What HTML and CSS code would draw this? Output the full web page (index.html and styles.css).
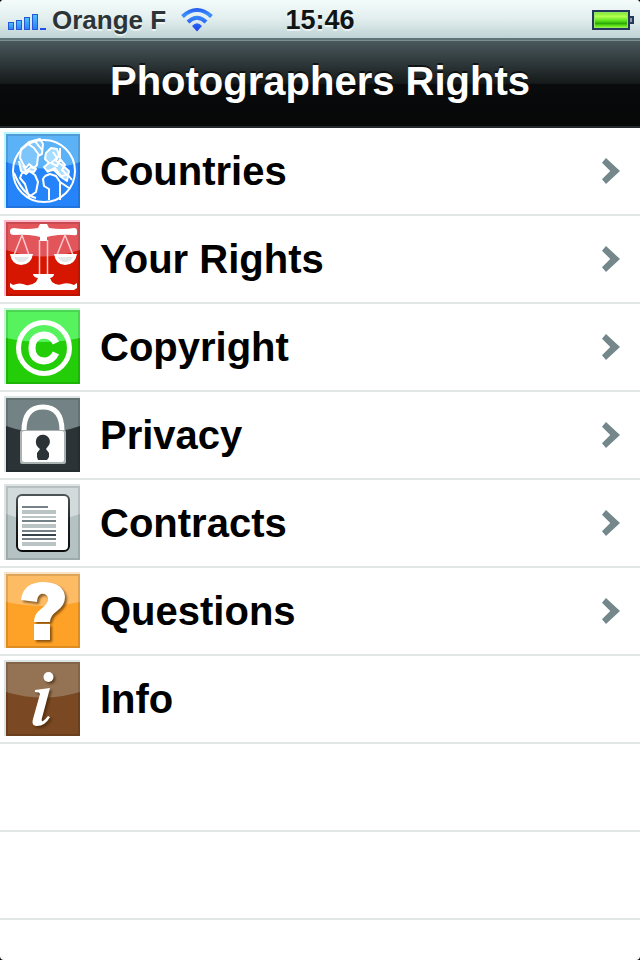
FILE: index.html
```
<!DOCTYPE html>
<html lang="en">
<head>
    <meta charset="UTF-8">
    <meta name="viewport" content="width=device-width, initial-scale=1.0">
    <title>Photographers Rights</title>
    <link rel="stylesheet" href="styles.css">
</head>
<body>
    <div class="screen">
        <div class="status-bar">
            <div class="carrier">
                <svg class="signal" width="38" height="18" viewBox="0 0 38 18" aria-hidden="true">
                    <defs>
                        <linearGradient id="barFill" x1="0" y1="0" x2="0" y2="1">
                            <stop offset="0" stop-color="#4cc4ff"/>
                            <stop offset="1" stop-color="#2e7cf6"/>
                        </linearGradient>
                    </defs>
                    <g fill="url(#barFill)" stroke="#2458d8" stroke-width="1">
                        <rect x="0.5" y="9.5" width="5" height="7"/>
                        <rect x="8.5" y="7.5" width="5" height="9"/>
                        <rect x="16.5" y="4.5" width="5" height="12"/>
                        <rect x="24.5" y="1.5" width="5" height="15"/>
                    </g>
                    <rect x="32" y="15" width="6" height="2" fill="#2050e8"/>
                </svg>
                <span>Orange F</span>
                <svg class="wifi" width="32" height="26" viewBox="0 0 32 26" aria-hidden="true">
                    <defs>
                        <linearGradient id="wifiFill" x1="0" y1="0" x2="0" y2="26" gradientUnits="userSpaceOnUse">
                            <stop offset="0" stop-color="#1f50ea"/>
                            <stop offset="0.3" stop-color="#3a90ff"/>
                            <stop offset="1" stop-color="#1838e8"/>
                        </linearGradient>
                    </defs>
                    <g fill="none" stroke="url(#wifiFill)" stroke-width="4">
                        <path d="M1.5 9.5Q16 -3.5 30.5 9.5"/>
                        <path d="M7 15Q16 6.5 25 15"/>
                    </g>
                    <path d="M11 19Q16 13.5 21 19L16 24.5Z" fill="url(#wifiFill)"/>
                </svg>
            </div>
            <time class="clock">15:46</time>
            <svg class="battery" width="42" height="22" viewBox="0 0 42 22" aria-hidden="true">
                <defs>
                    <linearGradient id="charge" x1="0" y1="0" x2="0" y2="1">
                        <stop offset="0" stop-color="#86e83a"/>
                        <stop offset="0.25" stop-color="#b4ff50"/>
                        <stop offset="0.55" stop-color="#5be31c"/>
                        <stop offset="0.75" stop-color="#2eaa08"/>
                        <stop offset="1" stop-color="#7cff20"/>
                    </linearGradient>
                </defs>
                <rect x="1" y="2" width="36" height="18" fill="#8fe860" stroke="#26375c" stroke-width="2"/>
                <rect x="3" y="4" width="32" height="14" fill="url(#charge)"/>
                <path d="M38 7h4v8h-4z" fill="#26375c"/>
                <path d="M38 9h2v4h-2z" fill="#8c9cae"/>
            </svg>
        </div>

        <header class="nav-bar">
            <h1 class="title">Photographers Rights</h1>
        </header>

        <nav class="menu">
            <a class="row" href="#countries">
                <svg class="icon countries" viewBox="6 6 74 74" aria-hidden="true">
                    <path class="gloss" d="M6 6H80V34Q43 47 6 34Z"/>
                    <path class="edge" d="M7 7H79V79H7Z"/>
                    <g fill="#a6dcff" stroke="#fff" stroke-width="2" stroke-linejoin="round">
                        <path d="M21 21L29 14L40 11L43 16L42 26L38 28L37 37L34 40L29 36L26 40L23 36L20 30Z" fill-opacity="0.45"/>
                        <path d="M23 37L26 43L31 39L36 41L34 44L29 43L26 46L21 43L19 33"/>
                        <path d="M46 25L51 20L57 21L59 27L56 33L62 37L69 43L67 53L61 49L54 42L47 43L44 39L49 35L45 31Z"/>
                        <path d="M53 24L57 30L51 35L57 38L60 31L65 37L62 42L67 47L61 48L55 40L47 44" fill="none"/>
                    </g>
                    <g fill="none" stroke="#fff" stroke-width="2" stroke-linejoin="round">
                        <path d="M22 45L20 50L25 56L29 69L36 64L38 54L35 47L29 43Z"/>
                        <path d="M45 48L43 51L44 58L49 61V72M60 72V54L56 48L50 46L45 48M60 54L69 60M60 20V30M68 47L72 52"/>
                        <path d="M27 15L34 20L39 27M34 12L42 22M14 45Q23 67 36 70"/>
                        <circle cx="44" cy="43" r="31"/>
                    </g>
                </svg>
                <span class="label">Countries</span>
                <span class="chevron"></span>
            </a>

            <a class="row" href="#rights">
                <svg class="icon rights" viewBox="6 6 74 74" aria-hidden="true">
                    <path class="gloss" d="M6 6H80V34Q43 47 6 34Z"/>
                    <path class="edge" d="M7 7H79V79H7Z"/>
                    <path d="M40 8H47L49 12Q63 14 74 12Q77 12 77 15V18Q76 20 73 19Q62 18 51 20L47 21V25H40V21L36 20Q25 18 14 19Q10 19 10 16V14Q11 12 14 12Q26 14 38 12Z" fill="#fff"/>
                    <path d="M22 19L14 39M22 19L29 39M65 19L57 39M65 19L73 39M39.5 24V60M47.5 24V60" fill="none" stroke="#ffc9cd" stroke-width="1.5"/>
                    <path d="M10 38H33Q31 49 21 49Q12 49 10 38ZM54 38H77Q75 49 65 49Q56 49 54 38Z" fill="#fff"/>
                    <path d="M14 41H29Q27 46 21 46Q16 46 14 41ZM58 41H73Q71 46 65 46Q60 46 58 41Z" fill="#e3e9e7"/>
                    <path d="M33 58H54Q54 61 50 62L52 66Q57 70 62 68Q68 66 74 69L77 67V72L74 74H14L10 71V67L13 69Q20 66 26 69Q31 70 36 66L38 62Q33 61 33 58Z" fill="#fff"/>
                </svg>
                <span class="label">Your Rights</span>
                <span class="chevron"></span>
            </a>

            <a class="row" href="#copyright">
                <svg class="icon copyright" viewBox="6 6 74 74" aria-hidden="true">
                    <path class="gloss" d="M6 6H80V34Q43 42 6 34Z"/>
                    <path class="edge" d="M7 7H79V79H7Z"/>
                    <circle cx="44" cy="44" r="25.5" fill="none" stroke="#fff" stroke-width="5"/>
                    <path d="M56 39Q52 31 44 31Q32 32 32 44Q32 56 44 57Q52 57 56 49" fill="none" stroke="#fff" stroke-width="7"/>
                </svg>
                <span class="label">Copyright</span>
                <span class="chevron"></span>
            </a>

            <a class="row" href="#privacy">
                <svg class="icon privacy" viewBox="6 6 74 74" aria-hidden="true">
                    <path class="gloss" d="M6 6H80V34Q43 47 6 34Z"/>
                    <path class="edge" d="M7 7H79V79H7Z"/>
                    <path d="M24 39Q24 15 43 15Q62 15 62 39" fill="none" stroke="#fff" stroke-width="5"/>
                    <rect x="20" y="38" width="46" height="34" rx="2" fill="#aab3b2"/>
                    <rect x="22" y="39" width="42" height="31" rx="2" fill="#fff"/>
                    <path d="M36 51A7 7 0 1 1 49 53L46 57L49 61V65L47 68H38L37 65V61L40 57Q36 54 36 51Z" fill="#2b3337"/>
                </svg>
                <span class="label">Privacy</span>
                <span class="chevron"></span>
            </a>

            <a class="row" href="#contracts">
                <svg class="icon contracts" viewBox="6 6 74 74" aria-hidden="true">
                    <defs>
                        <linearGradient id="paperEdge" x1="0" y1="0" x2="0" y2="1">
                            <stop offset="0" stop-color="#4d5456"/>
                            <stop offset="0.5" stop-color="#1c1f20"/>
                            <stop offset="1" stop-color="#0b0c0c"/>
                        </linearGradient>
                    </defs>
                    <path class="gloss" d="M6 6H80V34Q43 47 6 34Z"/>
                    <path class="edge" d="M7 7H79V79H7Z"/>
                    <rect x="17" y="15" width="52" height="56" rx="5" fill="#fff" stroke="url(#paperEdge)" stroke-width="2"/>
                    <path d="M22 30H56V34H22ZM22 36H56V38H22ZM22 44H56V48H22ZM22 62H56V66H22Z" fill="#bac4c4"/>
                    <path d="M22 26H48V28H22ZM22 40H56V42H22ZM22 50H56V52H22ZM22 58H56V60H22Z" fill="#758389"/>
                    <path d="M22 54H56V56H22Z" fill="#37434c"/>
                </svg>
                <span class="label">Contracts</span>
                <span class="chevron"></span>
            </a>

            <a class="row" href="#questions">
                <svg class="icon questions" viewBox="6 6 74 74" aria-hidden="true">
                    <path class="gloss" d="M6 6H80V34Q43 42 6 34Z"/>
                    <path class="edge" d="M7 7H79V79H7Z"/>
                    <path class="glyph" d="M21 32Q23 14 44 14Q64 15 65 29Q65 37 57 43Q50 48 50 54H34Q34 46 41 41Q49 35 48 30Q46 25 41 26Q37 28 37 34ZM34 56H50V72H34Z"/>
                </svg>
                <span class="label">Questions</span>
                <span class="chevron"></span>
            </a>

            <a class="row" href="#info">
                <svg class="icon info" viewBox="6 6 74 74" aria-hidden="true">
                    <path class="gloss" d="M6 6H80V36Q43 47 6 36Z"/>
                    <path class="edge" d="M7 7H79V79H7Z"/>
                    <circle class="glyph" cx="48.5" cy="21" r="5"/>
                    <path class="glyph" d="M35 34L50 32L42 62Q41 66 43 65Q45 64 48 60L50 61Q45 70 37 70Q31 70 33 63L40 38Q40 36 35 36Z"/>
                </svg>
                <span class="label">Info</span>
            </a>

            <div class="row"></div>
            <div class="row"></div>
        </nav>
    </div>
</body>
</html>
```
FILE: styles.css
```
* {
    margin: 0;
    padding: 0;
    box-sizing: border-box;
}

body {
    background-color: #000;
    font-family: "Liberation Sans", Arial, Helvetica, sans-serif;
    font-weight: bold;
}

.screen {
    min-height: 100vh;
    background-color: #fff;
    border-radius: 4px;
    overflow: hidden;
}

/* status bar */
.status-bar {
    height: 40px;
    padding: 0 6px;
    display: grid;
    grid-template-columns: 1fr auto 1fr;
    align-items: center;
    background: linear-gradient(#f3fcfb, #e2eeee 50%, #bfd3d5);
    border-bottom: 2px solid #5c7377;
    color: #2b3436;
    font-size: 26px;
    line-height: 40px;
    text-shadow: 0 2px 0 rgba(255, 255, 255, 0.6);
}

.carrier {
    display: flex;
    align-items: center;
    white-space: nowrap;
}

.signal {
    margin: 4px 6px 0 2px;
}

.wifi {
    margin-left: 15px;
}

.clock {
    color: #101415;
    font-size: 27px;
}

.battery {
    justify-self: end;
}

/* navigation bar */
.nav-bar {
    height: 88px;
    padding-top: 17px;
    background: linear-gradient(#4a595c, #303a3c 24%, #15191a 50%, #090b0c 51%, #060707);
    border-top: 1px solid #7e9093;
    border-bottom: 2px solid #24292b;
}

.title {
    color: #fff;
    font-size: 40px;
    line-height: 46px;
    text-align: center;
    text-shadow: 0 -2px 0 rgba(0, 0, 0, 0.6);
}

/* list */
.row {
    height: 88px;
    padding: 0 20px 0 4px;
    display: flex;
    align-items: center;
    gap: 20px;
    border-bottom: 2px solid #e1e6e6;
    color: #000;
    text-decoration: none;
}

.label {
    flex: 1;
    font-size: 40px;
    line-height: 46px;
}

.chevron {
    width: 18px;
    height: 26px;
    background-color: #74878a;
    clip-path: polygon(0 18%, 22% 0, 100% 50%, 22% 100%, 0 82%, 46% 50%);
}

/* icons */
.icon {
    width: 76px;
    height: 76px;
    margin-bottom: 2px;
    border-top: 2px solid #dde4e4;
    border-left: 2px solid #dde4e4;
}

.gloss {
    fill: #fff;
    fill-opacity: 0.28;
}

.edge {
    fill: none;
    stroke: #000;
    stroke-opacity: 0.12;
    stroke-width: 2;
}

.glyph {
    fill: #fff;
    filter: drop-shadow(2px 2px 1px rgba(60, 30, 0, 0.6));
}

.countries {
    background-color: #2684fb;
    border-color: #b8f4ff;
}

.countries .gloss {
    fill: #5cb2f7;
    fill-opacity: 1;
}

.rights {
    background-color: #d61600;
    border-color: #ffb9cf;
}

.rights .gloss {
    fill: #e2555a;
    fill-opacity: 1;
}

.copyright {
    background-color: #23cd08;
    border-color: #c6f5d2;
}

.copyright .gloss {
    fill: #56f35e;
    fill-opacity: 1;
}

.privacy {
    background-color: #2b3337;
}

.privacy .gloss {
    fill: #738285;
    fill-opacity: 1;
}

.contracts {
    background-color: #b5c2c3;
}

.contracts .gloss {
    fill-opacity: 0.4;
}

.questions {
    background-color: #fda127;
    border-color: #f6e3c8;
}

.info {
    background-color: #7a4822;
}

.info .gloss {
    fill: #b7b09a;
    fill-opacity: 0.42;
}
```
